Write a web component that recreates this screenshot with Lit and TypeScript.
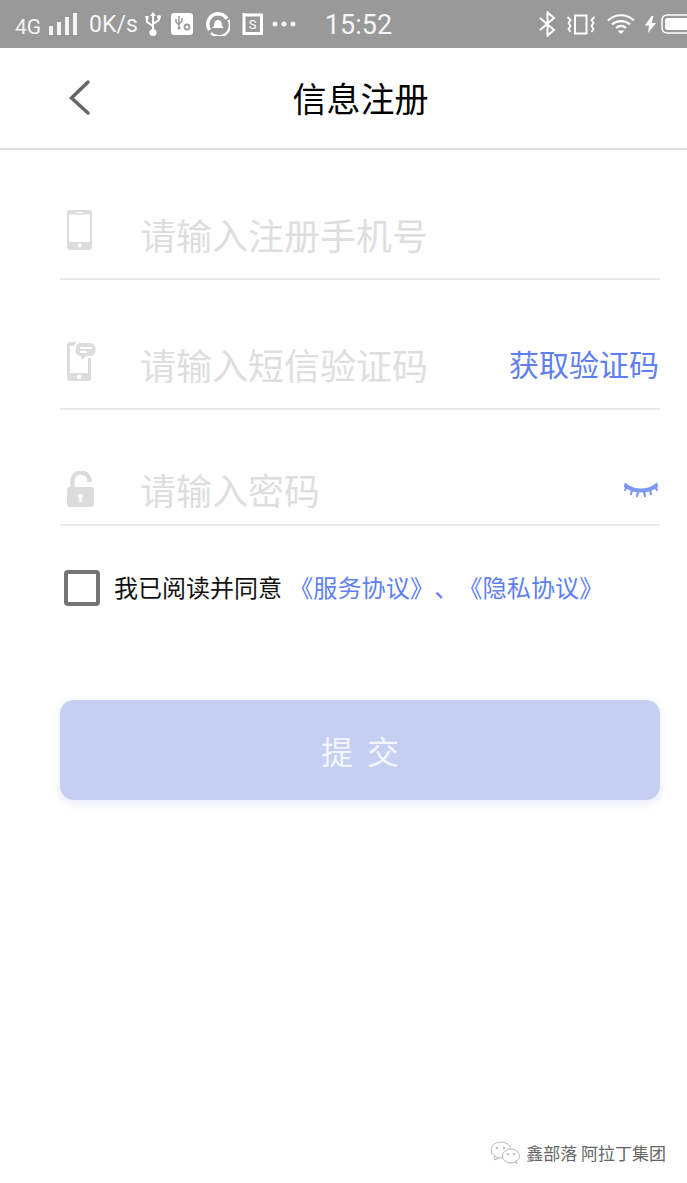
import { LitElement, html, css } from "lit";
import { customElement } from "lit/decorators.js";

@customElement("app-root")
export class AppRoot extends LitElement {
  static styles = css`
    :host { display: block; width: 687px; height: 1183px; background: #fff; overflow: hidden; position: relative;
      font-family: "Noto Sans CJK SC", "Liberation Sans", sans-serif; text-spacing-trim: space-all; }
    .status { height: 48px; background: #999; display: flex; align-items: center; color: #f4f4f4; font-family: Roboto, "Liberation Sans", sans-serif; }
    .status svg { display: block; flex: none; }
    .status span { display: block; flex: none; line-height: 48px; }
    .s4g { font-size: 21px; margin-left: 15px; padding-top: 5px; }
    .sbars { margin-left: 8px; }
    .speed { font-size: 23px; margin-left: 11px; padding-top: 2px; }
    .usb { margin-left: 7px; }
    .ic2 { margin-left: 10px; }
    .ic3 { margin-left: 13px; }
    .ic4 { margin-left: 12px; }
    .dots { margin-left: 9px; }
    .time { font-size: 27px; margin-left: 29px; padding-top: 2px; }
    .right { margin-left: auto; display: flex; align-items: center; }
    .vib { margin-left: 11px; }
    .wifi { margin-left: 12px; }
    .bolt { margin-left: 10px; }
    .batt { margin-left: 4px; }
    .nav { height: 100px; border-bottom: 2px solid #ddd; display: flex; align-items: center; position: relative; justify-content: center; }
    .back { position: absolute; left: 68px; top: 30px; }
    .title { font-size: 34px; color: #000; line-height: 100px; margin-left: 34px; }
    .form { margin: 0 27px 0 60px; }
    .row { display: flex; align-items: flex-end; border-bottom: 2px solid #eaeaea; }
    .r1 { height: 128px; }
    .r2 { height: 128px; }
    .r3 { height: 114px; }
    .icon { width: 80px; flex: none; padding-left: 7px; box-sizing: border-box; }
    .icon svg { display: block; }
    .ph { font-size: 36px; color: #dedede; line-height: 50px; flex: 1; white-space: nowrap; margin-bottom: 19px; }
    .r1 .icon { margin-bottom: 28px; }
    .r2 .icon { margin-bottom: 26px; }
    .r3 .icon { margin-bottom: 17px; padding-left: 7px; }
    .r3 .ph { margin-bottom: 10px; }
    .link { font-size: 30px; color: #5f7ff2; line-height: 44px; margin-right: 1px; margin-bottom: 23px; }
    .eye { margin-bottom: 27px; margin-right: 2px; }
    .agree { display: flex; align-items: center; margin-top: 44px; padding-left: 4px; }
    .box { width: 36px; height: 36px; box-sizing: border-box; border: 4px solid #757575; border-radius: 4px; flex: none; }
    .agree span { font-size: 24px; line-height: 36px; white-space: nowrap; }
    .t1 { color: #111; margin-left: 14px; padding-top: 0; margin-top: -2px; }
    .agree .t2 { color: #5f7ff2; margin-left: 7px; margin-top: -2px; font-size: 24.2px; }
    .submit { margin-top: 94px; height: 100px; width: 600px; border-radius: 14px; background: #c5cff1; box-shadow: 0 3px 8px rgba(90,110,190,.14);
      display: flex; align-items: center; justify-content: center; color: rgba(255,255,255,.82); font-size: 32px; letter-spacing: 14px; padding-left: 14px; box-sizing: border-box; }
    .mark { position: absolute; right: 21px; bottom: 18px; display: flex; align-items: center; color: #666; font-size: 17px; line-height: 24px; }
    .mark svg { display: block; margin-right: 5px; }
  `;

  render() {
    return html`
      <div class="status">
        <span class="s4g">4G</span>
        <svg class="sbars" width="29" height="22" viewBox="0 0 29 22" fill="#f4f4f4"><rect x="0" y="13" width="4" height="9"/><rect x="8" y="9" width="4" height="13"/><rect x="16" y="4" width="4" height="18"/><rect x="24" y="0" width="4" height="22"/></svg>
        <span class="speed">0K/s</span>
        <svg class="usb" width="16" height="24" viewBox="0 0 16 24" fill="none" stroke="#fff" stroke-width="2"><path d="M8 3v17M2 7v3l6 4M14 6v2l-6 4"/><path d="M8 0l3 4H5z" fill="#fff" stroke="none"/><circle cx="8" cy="20.500" r="3.500" fill="#fff" stroke="none"/><rect x="0.500" y="4" width="3" height="3" fill="#fff" stroke="none"/><circle cx="14" cy="5" r="2" fill="#fff" stroke="none"/></svg>
        <svg class="ic2" width="22" height="22" viewBox="0 0 22 22"><rect width="22" height="22" rx="3" fill="#fff"/><path d="M8 3v11M5 6v3l3 3M11 5v3l-3 3" fill="none" stroke="#999" stroke-width="1.500"/><circle cx="8" cy="15" r="1.600" fill="#999"/><circle cx="16" cy="14" r="2.500" fill="none" stroke="#999" stroke-width="1.800"/></svg>
        <svg class="ic3" width="24" height="24" viewBox="0 0 24 24" fill="none"><path d="M5 21A11 11 0 0 0 22.500 8" stroke="#fff" stroke-width="2.400"/><path d="M3.500 18A10.500 10.500 0 0 1 12 1.800a11 11 0 0 1 9 5" stroke="#fff" stroke-width="3.400"/><path d="M5.500 16c2.500-.5 2.500-3 3-5.500.7-3.500 6.300-3.500 7 0 .5 2.500.5 5 3 5.500z" fill="#fff"/></svg>
        <svg class="ic4" width="21" height="22" viewBox="0 0 21 22" fill="none"><path d="M2 2h17.500v18.500H2V0" stroke="#fff" stroke-width="3"/><text x="10.500" y="16" text-anchor="middle" font-size="13" font-family="Roboto" fill="#fff">S</text></svg>
        <svg class="dots" width="24" height="6" viewBox="0 0 24 6" fill="#f4f4f4"><circle cx="3" cy="3" r="2.500"/><circle cx="12" cy="3" r="2.500"/><circle cx="21" cy="3" r="2.500"/></svg>
        <span class="time">15:52</span>
        <div class="right">
          <svg width="17" height="26" viewBox="0 0 17 26" fill="none" stroke="#fff" stroke-width="2"><path d="M1 7l14 12-6.500 5.500V1.500L15 7 1 19"/></svg>
          <svg class="vib" width="28" height="21" viewBox="0 0 28 21" fill="none" stroke="#fff" stroke-width="2"><rect x="8" y="1.500" width="11.500" height="18"/><path d="M0.500 3l3 3-2 3 2 3-2 3 2 3M27.500 3l-3 3 2 3-2 3 2 3-2 3" stroke-width="1.800"/></svg>
          <svg class="wifi" width="28" height="20" viewBox="0 0 28 20" fill="none" stroke="#fff" stroke-width="2.200"><path d="M1 6.500C8-.5 20-.5 27 6.500M5 10.500c5-4.500 13-4.500 18 0M9 14c3-2.500 7-2.500 10 0"/><path d="M10.500 16.500h7L14 20z" fill="#fff" stroke="none"/></svg>
          <svg class="bolt" width="11" height="17" viewBox="0 0 11 17" fill="#fff"><path d="M6.500 0L0 9.500h4L3 17l8-10H6.500l2-7z"/></svg>
          <svg class="batt" width="27" height="20" viewBox="0 0 27 20"><path d="M27 1H7a5 5 0 0 0-5 5v8a5 5 0 0 0 5 5h20" fill="none" stroke="#fff" stroke-width="1.500"/><path d="M27 4H8a3 3 0 0 0-3 3v6a3 3 0 0 0 3 3h19z" fill="#fff"/></svg>
        </div>
      </div>
      <div class="nav">
        <svg class="back" width="24" height="40" viewBox="0 0 24 40" fill="none" stroke="#666" stroke-width="3.500" stroke-linecap="round"><path d="M20 4L3.500 20 20 35"/></svg>
        <div class="title">信息注册</div>
      </div>
      <div class="form">
        <div class="row r1">
          <div class="icon"><svg width="25" height="40" viewBox="0 0 25 40"><path fill-rule="evenodd" fill="#dcdcdc" d="M3 0h19a3 3 0 0 1 3 3v34a3 3 0 0 1-3 3H3a3 3 0 0 1-3-3V3a3 3 0 0 1 3-3zM2 4.500V32h21V4.500zM12.500 33.500a2 2 0 1 0 0 4 2 2 0 0 0 0-4zM9 2v1h7V2z"/></svg></div>
          <div class="ph">请输入注册手机号</div>
        </div>
        <div class="row r2">
          <div class="icon"><svg width="30" height="41" viewBox="0 0 30 41"><path fill="#dcdcdc" fill-rule="evenodd" d="M3 1h18a3 3 0 0 1 3 3v33a3 3 0 0 1-3 3H3a3 3 0 0 1-3-3V4a3 3 0 0 1 3-3zM3 5v27h18V5zM12 33.500a2.300 2.300 0 1 0 0 4.600 2.300 2.300 0 0 0 0-4.600z"/><path fill="#dcdcdc" stroke="#fff" stroke-width="2" d="M14 1h9a6.500 6.500 0 0 1 6.500 6.500v2A6.500 6.500 0 0 1 23 16h-4l-5.500 6.500V16A6.500 6.500 0 0 1 7.500 9.500v-2A6.500 6.500 0 0 1 14 1z"/><path fill="#fff" d="M13 6h12v2H13zM13 10h7v2h-7z"/></svg></div>
          <div class="ph">请输入短信验证码</div>
          <div class="link">获取验证码</div>
        </div>
        <div class="row r3">
          <div class="icon"><svg width="28" height="36" viewBox="0 0 28 36"><path fill="none" stroke="#dcdcdc" stroke-width="4.500" d="M5.500 18V10a8.500 8.500 0 0 1 17 0v1"/><path fill="#dcdcdc" fill-rule="evenodd" d="M3 16h21a3 3 0 0 1 3 3v14a3 3 0 0 1-3 3H3a3 3 0 0 1-3-3V19a3 3 0 0 1 3-3zM13.500 22.500a2.500 2.500 0 0 0-1.300 4.600V31h2.600v-3.900a2.500 2.500 0 0 0-1.300-4.600z"/></svg></div>
          <div class="ph">请输入密码</div>
          <svg class="eye" width="34" height="14" viewBox="0 0 34 14" fill="none" stroke="#7d98f6" stroke-linecap="round"><path d="M2 3c9 6 21 6 30 0" stroke-width="4"/><path d="M3 3L1.500 1M8 7l-1 4M14 9l-1 4M20 9l1 4M26 7l1 4M31 3l1.500-2M31 4l2 3M3 4L1 7" stroke-width="2.200"/></svg>
        </div>
        <div class="agree">
          <div class="box"></div>
          <span class="t1">我已阅读并同意</span>
          <span class="t2">《服务协议》、《隐私协议》</span>
        </div>
        <div class="submit">提交</div>
      </div>
      <div class="mark">
        <svg width="31" height="24" viewBox="0 0 31 24" fill="none" stroke="#bbb" stroke-width="1"><ellipse cx="11" cy="9" rx="10" ry="8"/><path d="M5 15l-1 4 5-2"/><ellipse cx="21" cy="15" rx="8.500" ry="7" fill="#fff"/><path d="M25 21l2 2-1-4"/><circle cx="7" cy="7" r=".8" fill="#aaa"/><circle cx="14" cy="7" r=".8" fill="#aaa"/><circle cx="18" cy="13" r=".8" fill="#aaa"/><circle cx="24" cy="13" r=".8" fill="#aaa"/></svg>
        <span>鑫部落 阿拉丁集团</span>
      </div>
    `;
  }
}
